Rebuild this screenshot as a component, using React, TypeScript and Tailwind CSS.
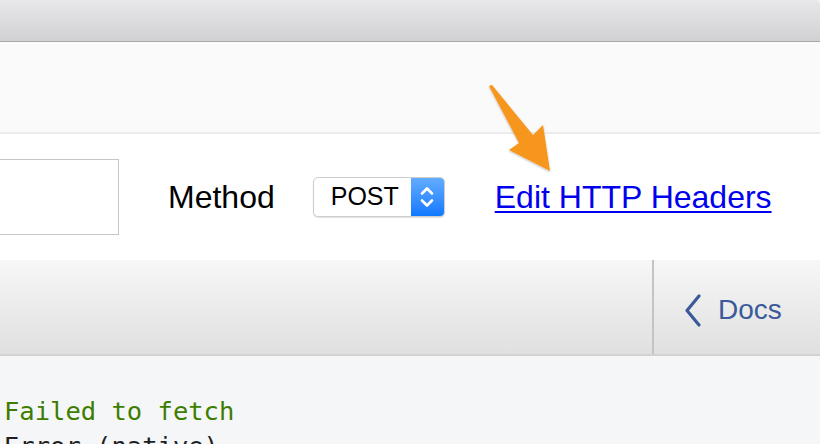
function MethodSelect() {
  return (
    <div className="flex h-[40px] w-[132px] overflow-hidden rounded-[5px] border border-[#cdcdcd] bg-white shadow-[0_1px_1px_rgba(0,0,0,0.12)]">
      <div className="flex flex-1 items-center pl-[17px] text-[25px] text-black">POST</div>
      <div className="flex w-[33px] items-center justify-center bg-gradient-to-b from-[#62acff] to-[#0a78ff]">
        <svg width="16" height="26" viewBox="0 0 16 26" fill="none" stroke="white" strokeWidth="2.6" strokeLinecap="round" strokeLinejoin="round">
          <path d="M3 9.5 L8 4.5 L13 9.5" />
          <path d="M3 16.5 L8 21.5 L13 16.5" />
        </svg>
      </div>
    </div>
  );
}

function Arrow() {
  return (
    <svg className="pointer-events-none absolute left-0 top-0" width="820" height="444" viewBox="0 0 820 444">
      <defs>
        <filter id="arrowShadow" x="-20%" y="-20%" width="140%" height="140%">
          <feDropShadow dx="0" dy="1" stdDeviation="1.2" floodColor="#000" floodOpacity="0.28" />
        </filter>
      </defs>
      <path
        d="M489 86 L519 143 L509 150 L550 171 L543 125 L533 135 L492 85 Z"
        fill="#f7961d"
        filter="url(#arrowShadow)"
        strokeLinejoin="round"
      />
    </svg>
  );
}

export default function App() {
  return (
    <div className="relative h-[444px] w-[820px] overflow-hidden bg-[#f2f2f2] font-['Liberation_Sans',Arial,sans-serif]">
      <div className="flex h-full flex-col">
        {/* window title bar */}
        <div className="h-[42px] shrink-0 rounded-tr-[5px] border-b border-[#a8a7aa] bg-gradient-to-b from-[#e8e7ea] to-[#d1d0d3]"></div>

        <div className="h-[92px] shrink-0 border-b-2 border-[#ececec] bg-[#fafafa]"></div>

        {/* endpoint row */}
        <div className="flex h-[126px] shrink-0 items-center bg-white">
          <div className="h-[76px] w-[119px] border border-l-0 border-[#c6c6c6] bg-white"></div>
          <div className="ml-[49px] text-[32px] leading-none text-black">Method</div>
          <div className="ml-[38px]">
            <MethodSelect />
          </div>
          <a href="#" className="ml-[50px] text-[32px] leading-none text-[#0000ee] underline underline-offset-[3px] decoration-[2px]">
            Edit HTTP Headers
          </a>
        </div>

        {/* toolbar */}
        <div className="flex h-[96px] shrink-0 border-b-2 border-[#d2d2d2] bg-gradient-to-b from-[#f7f7f7] to-[#e0e0e0]">
          <div className="flex-1"></div>
          <div className="flex w-[168px] items-center border-l-2 border-[#c4c4c4] pl-[30px] pt-[6px] text-[#3b5a9a]">
            <svg width="18" height="33" viewBox="0 0 18 33" fill="none" stroke="currentColor" strokeWidth="3.2" strokeLinecap="round" strokeLinejoin="round">
              <path d="M15 2 L3 16.5 L15 31" />
            </svg>
            <span className="ml-[16px] text-[28px] leading-none">Docs</span>
          </div>
        </div>

        {/* result pane */}
        <div className="flex-1 bg-[#f5f6f8] pl-[4px] pt-[38px] font-['DejaVu_Sans_Mono',monospace] text-[25.5px] leading-[35px]">
          <div className="text-[#3d7d00]">Failed to fetch</div>
          <div className="text-[#1d1f24]">Error (native)</div>
        </div>
      </div>
      <Arrow />
    </div>
  );
}
